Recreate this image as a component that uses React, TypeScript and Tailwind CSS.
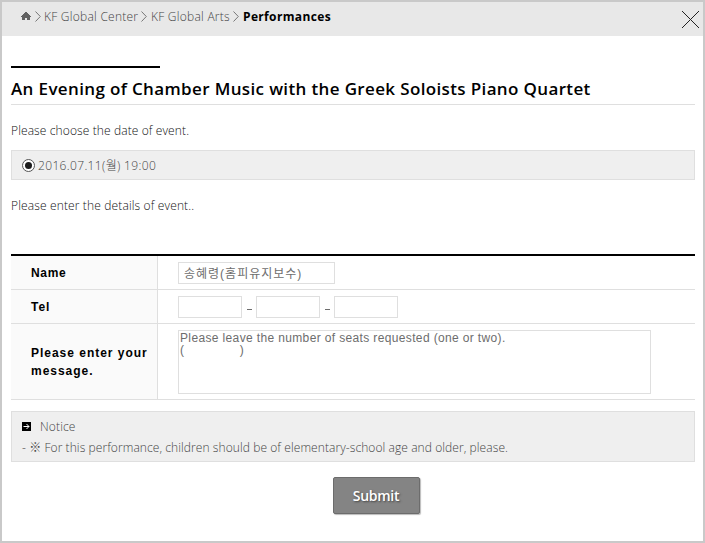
import type { ReactNode } from 'react';

const BODY_FONT = "font-['Open_Sans','Noto_Sans_CJK_KR',sans-serif]";
const FORM_FONT = "font-['Liberation_Sans','Noto_Sans_CJK_KR',sans-serif]";

function HomeIcon() {
  return (
    <svg width="10" height="9" viewBox="0 0 10 9" fill="#636363" className="shrink-0">
      <path d="M4 0h2v1h1v1h1v1h1v1h1v1H9v3H6V6H4v2H1V5H0V4h1V3h1V2h1V1h1z" />
    </svg>
  );
}

function Chevron({ className }: { className: string }) {
  return (
    <svg width="6" height="11" viewBox="0 0 6 11" fill="none" stroke="#777" className={`shrink-0 ${className}`}>
      <path d="M.5.5 5.3 5.5.5 10.5" />
    </svg>
  );
}

function FormRow({ label, className, children }: { label: ReactNode; className: string; children: ReactNode }) {
  return (
    <div className={`flex border-b border-[#dfdfdf] ${className}`}>
      <div className="flex w-[147px] shrink-0 items-center border-r border-[#dfdfdf] bg-[#fafafa] pl-5 text-[12px] leading-[18px] font-bold text-black">
        {label}
      </div>
      <div className="flex items-start pt-1.5 pl-5">{children}</div>
    </div>
  );
}

function TelInput() {
  return <input type="text" className="h-[22px] w-16 border border-[#dfdfdf] bg-white px-1 text-[12px] outline-none" />;
}

export default function App() {
  return (
    <div className={`h-[543px] w-[705px] overflow-hidden border-2 border-[#c9c9c9] bg-white text-[12px] font-light whitespace-nowrap text-[#111] ${BODY_FONT}`}>
      {/* Breadcrumb bar */}
      <header className="flex h-[34px] items-start justify-between bg-[#e8e8e8]">
        <nav className="flex h-[29px] items-center pl-[19px] text-[12px] text-[#444]">
          <HomeIcon />
          <Chevron className="ml-[4px]" />
          <span className="ml-[3px] w-[95px] tracking-[0.25px]">KF Global Center</span>
          <Chevron className="ml-[2px]" />
          <span className="ml-[4px] w-[79px] tracking-[0.25px]">KF Global Arts</span>
          <Chevron className="ml-[3px]" />
          <span className="ml-[4px] font-bold tracking-[0.35px] text-black">Performances</span>
        </nav>
        <button type="button" aria-label="Close" className="mt-[9px] mr-[4px]">
          <svg width="17" height="17" viewBox="0 0 17 17" stroke="#222" fill="none">
            <path d="M0 0 17 17M17 0 0 17" />
          </svg>
        </button>
      </header>

      <main className="px-[9px] pr-[8px]">
        <div className="mt-[30px] h-0.5 w-[149px] bg-black" />
        <h1 className="flex h-[37px] items-center border-b border-[#dfdfdf] pt-[6px] text-[17px] font-semibold tracking-[0.36px] text-black">
          An Evening of Chamber Music with the Greek Soloists Piano Quartet
        </h1>

        <p className="mt-4 h-5 leading-5 tracking-[0.11px]">Please choose the date of event.</p>
        <label className="mt-[9px] flex h-[30px] items-center border border-[#dfdfdf] bg-[#efefef] pl-[10px] text-[#444]">
          <span className="flex size-[13px] items-center justify-center rounded-full border border-[#555] bg-white">
            <span className="size-[7px] rounded-full bg-[#1c1c1c]" />
          </span>
          <span className="ml-[3px] pt-px tracking-[0.35px]">2016.07.11(월) 19:00</span>
        </label>
        <p className="mt-4 h-5 leading-5 tracking-[0.14px]">Please enter the details of event..</p>

        {/* Application form */}
        <section className={`mt-[38px] border-t-2 border-black font-normal ${FORM_FONT}`}>
          <FormRow label={<span className="tracking-[0.7px]">Name</span>} className="h-[34px]">
            <input
              type="text"
              defaultValue="송혜령(홈피유지보수)"
              className="h-[22px] w-[157px] border border-[#dfdfdf] bg-white px-[5px] pb-[2px] text-[12px] tracking-[1px] text-[#6d6d6d] outline-none"
            />
          </FormRow>
          <FormRow label={<span className="tracking-[1px]">Tel</span>} className="h-[34px]">
            <TelInput />
            <span className="mt-[13px] mr-[4px] ml-[5px] h-px w-[5px] bg-[#6d6d6d]" />
            <TelInput />
            <span className="mt-[13px] mr-[4px] ml-[5px] h-px w-[5px] bg-[#6d6d6d]" />
            <TelInput />
          </FormRow>
          <FormRow
            label={
              <span className="tracking-[0.98px]">
                Please enter your
                <br />
                message.
              </span>
            }
            className="h-[76px]"
          >
            <textarea
              className="h-16 w-[473px] resize-none border border-[#dfdfdf] bg-white px-px py-[1px] text-[12px] leading-[12px] tracking-[0.36px] text-[#6d6d6d] outline-none"
              defaultValue={'Please leave the number of seats requested (one or two).\n(               )'}
            />
          </FormRow>
        </section>

        {/* Notice */}
        <section className="mt-[11px] h-[51px] border border-[#dfdfdf] bg-[#efefef] pt-1 pl-[10px] text-[#444]">
          <div className="flex h-[21px] items-center">
            <svg width="9" height="9" viewBox="0 0 9 9">
              <path d="M0 0h9v9H0z" />
              <path d="M1.5 4.5H7M4.5 2 7 4.5 4.5 7" stroke="#fff" fill="none" />
            </svg>
            <span className="ml-[9px] tracking-[0.15px]">Notice</span>
          </div>
          <p className="h-[21px] leading-[21px] tracking-[0.08px]">
            - ※ For this performance, children should be of elementary-school age and older, please.
          </p>
        </section>

        <div className="mt-[15px] flex justify-center pl-[47px]">
          <button
            type="button"
            className="h-[37px] w-[87px] rounded-[2px] border border-[#6c6c6c] bg-[#848484] pr-px text-[14px] font-semibold tracking-[-0.3px] text-white shadow-[1px_1px_1px_#bbb] [text-shadow:1px_1px_2px_#444]"
          >
            Submit
          </button>
        </div>
      </main>
    </div>
  );
}
